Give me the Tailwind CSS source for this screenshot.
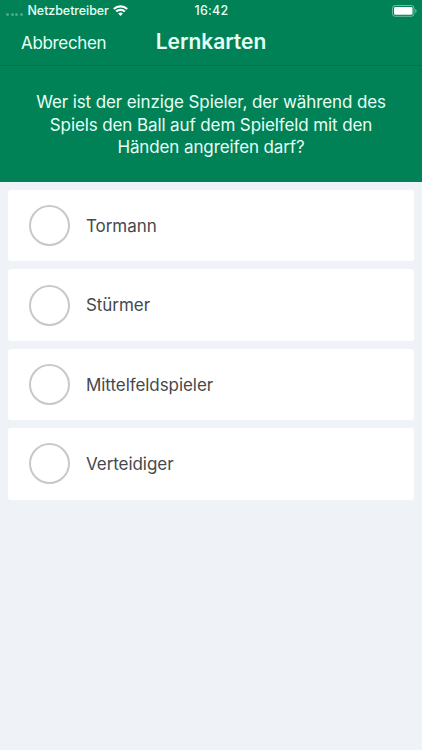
<!DOCTYPE html>
<html lang="de">
<head>
<meta charset="utf-8">
<meta name="viewport" content="width=device-width, initial-scale=1">
<title>Lernkarten</title>
<script src="https://cdn.jsdelivr.net/npm/@tailwindcss/browser@4"></script>
</head>
<body class="h-screen overflow-hidden bg-[#eff3f7] font-['Inter','Liberation_Sans',sans-serif] text-[#47484d]">
<header class="bg-[#008256] text-[#e6fff5]">
  <div class="grid h-5 grid-cols-[1fr_auto_1fr] items-center pl-[6px] pr-[5px] text-[12.5px] font-medium leading-5">
    <div class="flex items-center">
      <div class="mt-2 flex gap-[1.5px]">
        <i class="size-[3px] rounded-full bg-white/30"></i><i class="size-[3px] rounded-full bg-white/30"></i><i class="size-[3px] rounded-full bg-white/30"></i><i class="size-[3px] rounded-full bg-white/30"></i>
      </div>
      <span class="ml-[5px] pt-px tracking-[-0.08px]">Netzbetreiber</span>
      <svg class="ml-1 h-[11px] w-[15px]" viewBox="0 0 15 11" fill="none" stroke="#fff" stroke-width="2.1"><path d="M.8 4.1a9.6 9.6 0 0 1 13.4 0M3.2 6.6a6.2 6.2 0 0 1 8.6 0"/><path d="M7.5 11 5.1 8.6a3.5 3.5 0 0 1 4.8 0z" fill="#fff" stroke="none"/></svg>
    </div>
    <span class="pt-px tracking-[0.2px]">16:42</span>
    <svg class="h-3 w-[25px] justify-self-end" viewBox="0 0 25 12"><rect x=".5" y=".5" width="21.5" height="10.8" rx="2.7" fill="none" stroke="#fff" stroke-opacity=".45"/><rect x="2" y="2" width="18.5" height="7.8" rx="1.3" fill="#fff"/><path d="M23.3 4v4c1.7-.6 1.7-3.4 0-4z" fill="#fff" fill-opacity=".5"/></svg>
  </div>
  <div class="grid h-[46px] grid-cols-[1fr_auto_1fr] items-center border-b border-[#00734c] px-[21px]">
    <span class="pt-px text-[17px] leading-[22px] tracking-[-0.33px]">Abbrechen</span>
    <h1 class="-mt-px text-[21px] font-semibold leading-6 tracking-[-0.05px]">Lernkarten</h1>
    <span></span>
  </div>
  <p class="h-[115.5px] pt-[25px] text-center text-[17px] leading-[22.5px] tracking-[-0.11px]">Wer ist der einzige Spieler, der während des<br>Spiels den Ball auf dem Spielfeld mit den<br>Händen angreifen darf?</p>
</header>
<main class="flex flex-col gap-2 px-2 pt-[8.5px]">
  <div class="flex h-[71.4px] items-center gap-4 rounded-[3px] bg-white pl-[21px]"><span class="size-[41px] rounded-full border-2 border-[#c8c8c8]"></span><span class="pt-[2px] text-[17px] tracking-[-0.06px]">Tormann</span></div>
  <div class="flex h-[71.4px] items-center gap-4 rounded-[3px] bg-white pl-[21px]"><span class="size-[41px] rounded-full border-2 border-[#c8c8c8]"></span><span class="pt-[2px] text-[17px] tracking-[-0.06px]">Stürmer</span></div>
  <div class="flex h-[71.4px] items-center gap-4 rounded-[3px] bg-white pl-[21px]"><span class="size-[41px] rounded-full border-2 border-[#c8c8c8]"></span><span class="pt-[2px] text-[17px] tracking-[-0.06px]">Mittelfeldspieler</span></div>
  <div class="flex h-[71.4px] items-center gap-4 rounded-[3px] bg-white pl-[21px]"><span class="size-[41px] rounded-full border-2 border-[#c8c8c8]"></span><span class="pt-[2px] text-[17px] tracking-[-0.06px]">Verteidiger</span></div>
</main>
</body>
</html>
